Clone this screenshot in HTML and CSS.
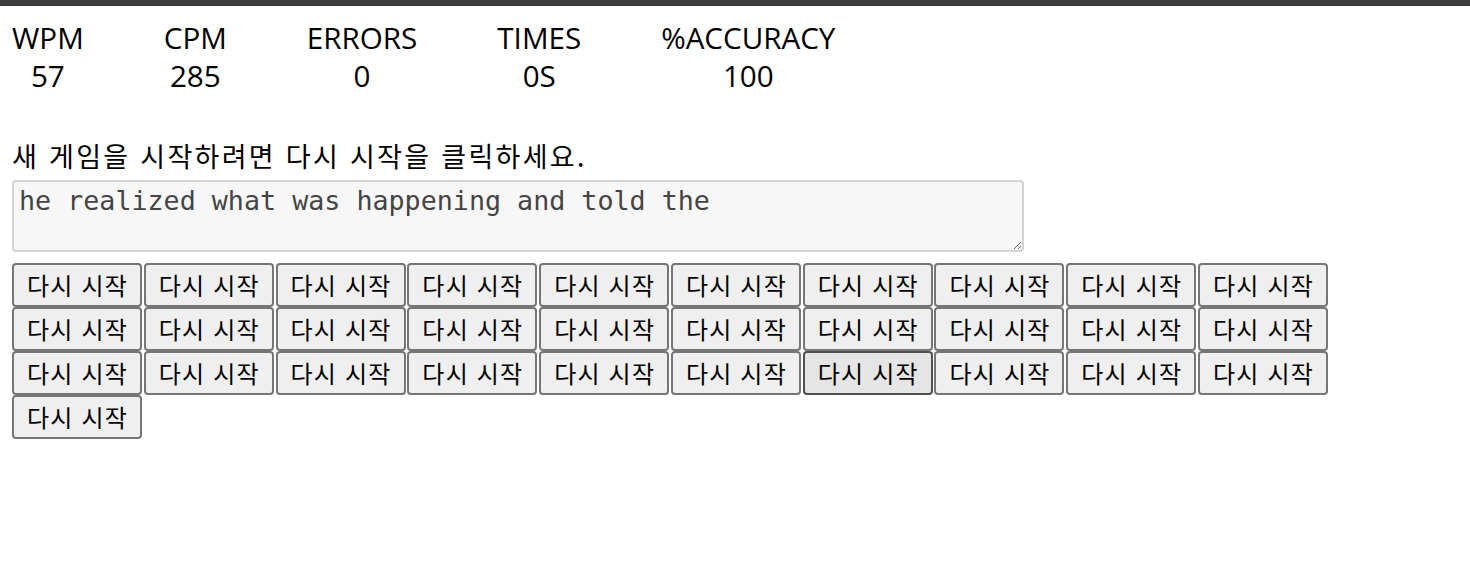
FILE: index.html
```html
<!DOCTYPE html>
<html lang="ko">
<head>
<meta charset="utf-8">
<title>Typing</title>
<link rel="stylesheet" href="styles.css">
</head>
<body>
<div class="topbar"></div>
<main class="page">
  <div class="stats">
    <div class="stat"><div class="label">WPM</div><div class="value">57</div></div>
    <div class="stat"><div class="label">CPM</div><div class="value">285</div></div>
    <div class="stat"><div class="label">ERRORS</div><div class="value">0</div></div>
    <div class="stat"><div class="label">TIMES</div><div class="value">0S</div></div>
    <div class="stat"><div class="label">%ACCURACY</div><div class="value">100</div></div>
  </div>
  <p class="prompt">새 게임을 시작하려면 다시 시작을 클릭하세요.</p>
  <textarea class="input">he realized what was happening and told the</textarea>
  <div class="buttons">
    <button class="btn">다시 시작</button>
    <button class="btn">다시 시작</button>
    <button class="btn">다시 시작</button>
    <button class="btn">다시 시작</button>
    <button class="btn">다시 시작</button>
    <button class="btn">다시 시작</button>
    <button class="btn">다시 시작</button>
    <button class="btn">다시 시작</button>
    <button class="btn">다시 시작</button>
    <button class="btn">다시 시작</button>
    <button class="btn">다시 시작</button>
    <button class="btn">다시 시작</button>
    <button class="btn">다시 시작</button>
    <button class="btn">다시 시작</button>
    <button class="btn">다시 시작</button>
    <button class="btn">다시 시작</button>
    <button class="btn">다시 시작</button>
    <button class="btn">다시 시작</button>
    <button class="btn">다시 시작</button>
    <button class="btn">다시 시작</button>
    <button class="btn">다시 시작</button>
    <button class="btn">다시 시작</button>
    <button class="btn">다시 시작</button>
    <button class="btn">다시 시작</button>
    <button class="btn">다시 시작</button>
    <button class="btn">다시 시작</button>
    <button class="btn btn-hover">다시 시작</button>
    <button class="btn">다시 시작</button>
    <button class="btn">다시 시작</button>
    <button class="btn">다시 시작</button>
    <button class="btn">다시 시작</button>
  </div>
</main>
</body>
</html>
```
FILE: styles.css
```css
html, body {
  margin: 0;
  padding: 0;
  background: #ffffff;
}
body {
  font-family: "Noto Sans CJK KR", "Noto Sans", sans-serif;
  color: #000;
}
.topbar {
  height: 6px;
  background: #3d3d3d;
}
.page {
  padding: 13px 12px 0 12px;
}
.stats {
  display: flex;
  gap: 80px;
  font-family: "Open Sans", "Noto Sans CJK KR", sans-serif;
  font-size: 29.6px;
  line-height: 38px;
}
.stat {
  display: flex;
  flex-direction: column;
  align-items: center;
}
.prompt {
  margin: 43px 0 6px 0;
  font-size: 27px;
  line-height: 36px;
  letter-spacing: 2.3px;
}
.input {
  display: block;
  box-sizing: border-box;
  width: 1012px;
  height: 72px;
  margin: 0;
  padding: 2px 5px;
  font-family: "DejaVu Sans Mono", monospace;
  font-size: 26.7px;
  line-height: 34px;
  color: #444;
  background: #f7f7f7;
  border: 2px solid #d4d4d4;
  border-radius: 4px;
}
.buttons {
  display: flex;
  flex-wrap: wrap;
  width: 1330px;
  column-gap: 1.78px;
  row-gap: 0;
  margin-top: 11px;
}
.btn {
  box-sizing: border-box;
  width: 130px;
  height: 44px;
  padding: 0;
  font-family: "Noto Sans CJK KR", sans-serif;
  font-size: 24px;
  line-height: 32px;
  letter-spacing: 1.2px;
  text-indent: 1.2px;
  color: #000;
  background: #efefef;
  border: 2px solid #767676;
  border-radius: 4px;
}
.btn-hover {
  background: #e5e5e5;
  border-color: #4f4f4f;
}
```
